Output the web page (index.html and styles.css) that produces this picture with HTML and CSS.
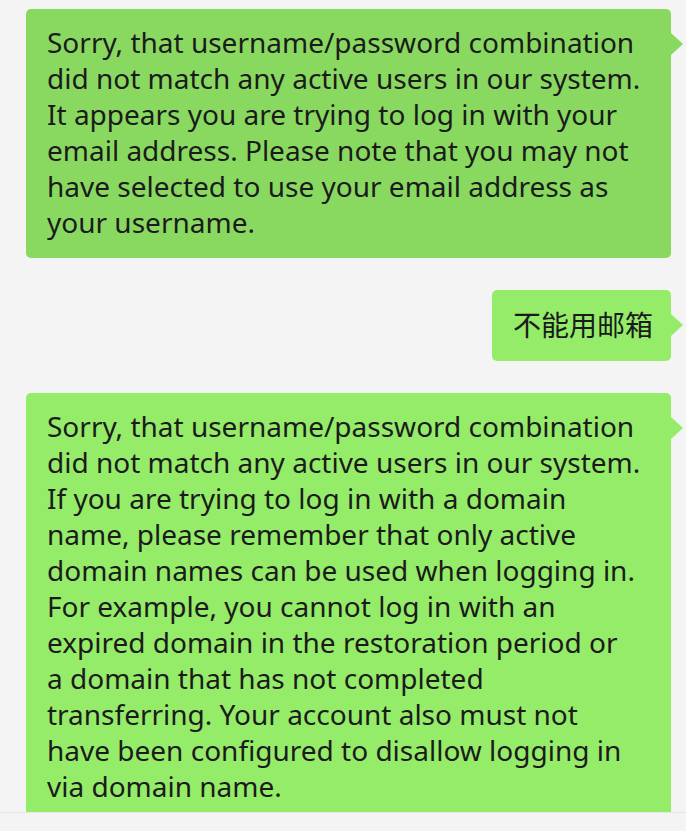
FILE: index.html
```html
<!DOCTYPE html>
<html lang="en">
<head>
<meta charset="utf-8">
<link rel="stylesheet" href="styles.css">
</head>
<body>
<div class="chat">
  <div class="row">
    <div class="bubble dark">Sorry, that username/password combination<br>did not match any active users in our system.<br>It appears you are trying to log in with your<br>email address. Please note that you may not<br>have selected to use your email address as<br>your username.</div>
  </div>
  <div class="row">
    <div class="bubble cjk">不能用邮箱</div>
  </div>
  <div class="row">
    <div class="bubble">Sorry, that username/password combination<br>did not match any active users in our system.<br>If you are trying to log in with a domain<br>name, please remember that only active<br>domain names can be used when logging in.<br>For example, you cannot log in with an<br>expired domain in the restoration period or<br>a domain that has not completed<br>transferring. Your account also must not<br>have been configured to disallow logging in<br>via domain name.</div>
  </div>
</div>
<div class="footer"></div>
</body>
</html>
```
FILE: styles.css
```css
html, body {
  margin: 0;
  padding: 0;
  background: #f4f4f4;
}
body {
  font-family: "Noto Sans", "Noto Sans CJK SC", sans-serif;
  color: #1b1b1b;
  width: 686px;
  height: 831px;
  overflow: hidden;
}
.chat {
  height: 812px;
  overflow: hidden;
  display: flex;
  flex-direction: column;
  align-items: flex-end;
  gap: 32px;
  padding: 9px 15px 0 0;
  box-sizing: border-box;
}
.row {
  display: flex;
  justify-content: flex-end;
}
.bubble {
  position: relative;
  background: #95ec69;
  border-radius: 5px;
  padding: 15px 20px 18px 21px;
  font-size: 28px;
  line-height: 36px;
  width: 604px;
  white-space: nowrap;
}
.bubble.dark {
  background: #89d961;
}
.bubble.cjk {
  width: auto;
  padding: 17px 18px 18px 21px;
}
.bubble::after {
  content: "";
  position: absolute;
  right: -12px;
  top: 24px;
  border-style: solid;
  border-width: 11px 0 11px 12px;
  border-color: transparent transparent transparent #95ec69;
}
.bubble.dark::after {
  border-left-color: #89d961;
}
.footer {
  height: 19px;
  border-top: 1px solid #e4e4e4;
  background: #f4f4f4;
}
```
